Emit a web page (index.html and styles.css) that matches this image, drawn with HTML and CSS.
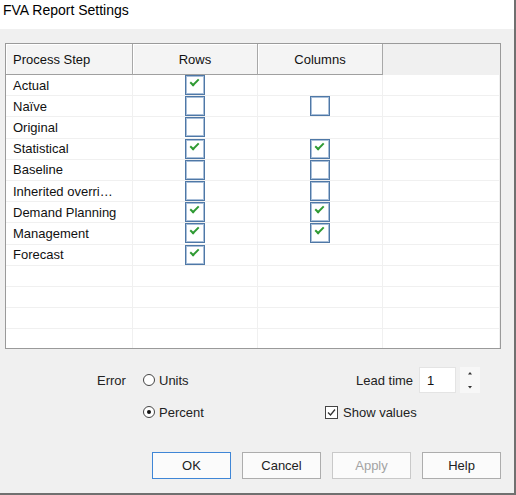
FILE: index.html
```html
<!DOCTYPE html>
<html>
<head>
<meta charset="utf-8">
<link rel="stylesheet" href="styles.css">
</head>
<body>
<div class="window">
  <div class="titlebar">FVA Report Settings</div>
  <div class="grid">
    <div class="hcell first">Process Step</div>
    <div class="hcell center">Rows</div>
    <div class="hcell center">Columns</div>
    <div class="hfill"></div>

    <div class="cell">Actual</div><div class="cell cb"><span class="box on"></span></div><div class="cell cb"></div><div class="cell"></div>
    <div class="cell">Naïve</div><div class="cell cb"><span class="box"></span></div><div class="cell cb"><span class="box"></span></div><div class="cell"></div>
    <div class="cell">Original</div><div class="cell cb"><span class="box"></span></div><div class="cell cb"></div><div class="cell"></div>
    <div class="cell">Statistical</div><div class="cell cb"><span class="box on"></span></div><div class="cell cb"><span class="box on"></span></div><div class="cell"></div>
    <div class="cell">Baseline</div><div class="cell cb"><span class="box"></span></div><div class="cell cb"><span class="box"></span></div><div class="cell"></div>
    <div class="cell">Inherited overri…</div><div class="cell cb"><span class="box"></span></div><div class="cell cb"><span class="box"></span></div><div class="cell"></div>
    <div class="cell">Demand Planning</div><div class="cell cb"><span class="box on"></span></div><div class="cell cb"><span class="box on"></span></div><div class="cell"></div>
    <div class="cell">Management</div><div class="cell cb"><span class="box on"></span></div><div class="cell cb"><span class="box on"></span></div><div class="cell"></div>
    <div class="cell">Forecast</div><div class="cell cb"><span class="box on"></span></div><div class="cell cb"></div><div class="cell"></div>
    <div class="cell"></div><div class="cell"></div><div class="cell"></div><div class="cell"></div>
    <div class="cell"></div><div class="cell"></div><div class="cell"></div><div class="cell"></div>
    <div class="cell"></div><div class="cell"></div><div class="cell"></div><div class="cell"></div>
    <div class="cell last"></div><div class="cell last"></div><div class="cell last"></div><div class="cell last"></div>
  </div>

  <div class="options">
    <div class="opt-label">Error</div>
    <div class="radio-item"><span class="radio"></span><span>Units</span></div>
    <div class="lead">
      <span>Lead time</span>
      <span class="numbox">1</span>
      <span class="spin">
        <svg width="20" height="26" viewBox="0 0 20 26"><path d="M8 7.5 L10 5 L12 7.5 Z" fill="#333"/><path d="M8 19 L10 21.5 L12 19 Z" fill="#333"/></svg>
      </span>
    </div>
    <div></div>
    <div class="radio-item"><span class="radio checked"></span><span>Percent</span></div>
    <div class="show">
      <span class="smallbox"><svg width="11" height="11" viewBox="0 0 11 11"><path d="M2 5.5 L4.5 8 L9 2.5" fill="none" stroke="#333" stroke-width="1.3"/></svg></span>
      <span>Show values</span>
    </div>
  </div>

  <div class="buttons">
    <div class="btn default">OK</div>
    <div class="btn">Cancel</div>
    <div class="btn disabled">Apply</div>
    <div class="btn">Help</div>
  </div>
</div>
</body>
</html>
```
FILE: styles.css
```css
html, body {
  margin: 0;
  padding: 0;
}
body {
  background: #f0f0f0;
  font-family: "Liberation Sans", Arial, sans-serif;
  color: #000;
}
.window {
  width: 516px;
  height: 495px;
  box-sizing: border-box;
  border-right: 2px solid #707070;
  border-bottom: 2px solid #707070;
  background: #f0f0f0;
  overflow: hidden;
}
.titlebar {
  height: 29px;
  background: #fff;
  font-size: 14px;
  line-height: 21px;
  padding-left: 3px;
  color: #000;
}
.grid {
  margin: 14px 0 0 5px;
  width: 496px;
  height: 306px;
  box-sizing: border-box;
  border: 1px solid #9a9a9a;
  background: #fff;
  display: grid;
  grid-template-columns: 127px 125px 125px 117px;
  grid-template-rows: 31px repeat(13, 21.2px);
  overflow: hidden;
  font-size: 13px;
}
.hcell {
  background: #f4f4f4;
  border-right: 1px solid #a8a8a8;
  border-bottom: 1px solid #a0a0a0;
  box-shadow: inset 1px 1px 0 #ffffff;
  display: flex;
  align-items: center;
  color: #111;
}
.hcell.first {
  padding-left: 7px;
}
.hcell.center {
  justify-content: center;
}
.hfill {
  background: #f0f0f0;
}
.cell {
  border-right: 1px solid #f0f0f0;
  border-bottom: 1px solid #f0f0f0;
  display: flex;
  align-items: center;
  padding-left: 7px;
  white-space: nowrap;
  overflow: hidden;
  color: #111;
}
.cell.last {
  border-bottom: none;
}
.cell.cb {
  padding-left: 0;
  justify-content: center;
  align-items: flex-start;
}
.box {
  width: 20px;
  height: 20px;
  box-sizing: border-box;
  border: 1px solid #4f78a6;
  box-shadow: inset 0 0 0 1px #a9bfd9;
  background: #fff;
  position: relative;
}
.box.on::after {
  content: "";
  position: absolute;
  left: 4px;
  top: 3px;
  width: 7px;
  height: 3px;
  border-left: 2.5px solid #2f9a33;
  border-bottom: 2.5px solid #2f9a33;
  transform: rotate(-45deg);
  transform-origin: center;
}
.options {
  margin-top: 18px;
  padding-left: 97px;
  display: grid;
  grid-template-columns: 46px 182px auto;
  grid-template-rows: 26px 26px;
  row-gap: 6px;
  font-size: 13px;
  color: #222;
}
.opt-label {
  display: flex;
  align-items: center;
}
.radio-item {
  display: flex;
  align-items: center;
  gap: 4px;
}
.radio {
  width: 12px;
  height: 12px;
  box-sizing: border-box;
  border: 1px solid #444;
  border-radius: 50%;
  background: #fff;
  position: relative;
}
.radio.checked::after {
  content: "";
  position: absolute;
  left: 3px;
  top: 3px;
  width: 4px;
  height: 4px;
  border-radius: 50%;
  background: #111;
}
.lead {
  display: flex;
  align-items: center;
  padding-left: 31px;
}
.numbox {
  margin-left: 6px;
  width: 37px;
  height: 26px;
  box-sizing: border-box;
  background: #fff;
  border: 1px solid #e4e4e4;
  padding-left: 7px;
  display: flex;
  align-items: center;
  color: #111;
}
.spin {
  margin-left: 4px;
  width: 20px;
  height: 26px;
  background: #f7f7f7;
  display: flex;
}
.show {
  display: flex;
  align-items: center;
  gap: 5px;
}
.smallbox {
  width: 13px;
  height: 13px;
  box-sizing: border-box;
  border: 1px solid #444;
  background: #fff;
  display: flex;
  align-items: center;
  justify-content: center;
}
.buttons {
  margin-top: 27px;
  padding-left: 152px;
  display: flex;
  gap: 11px;
}
.btn {
  width: 79px;
  height: 27px;
  box-sizing: border-box;
  border: 1px solid #adadad;
  background: #fbfbfb;
  font-size: 13px;
  color: #222;
  display: flex;
  align-items: center;
  justify-content: center;
}
.btn.default {
  border: 1px solid #3f86d6;
}
.btn.disabled {
  color: #a3a3a3;
  border-color: #c9c9c9;
}
```
